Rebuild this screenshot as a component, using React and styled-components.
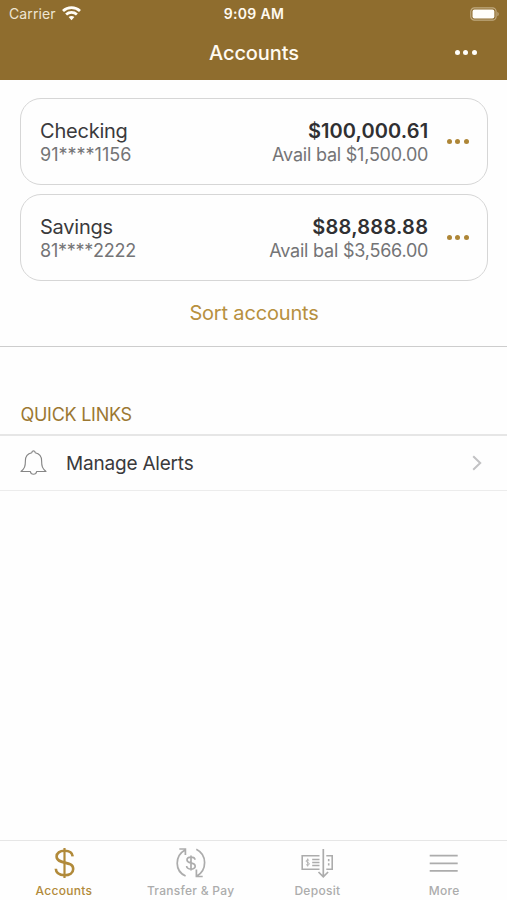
import React from "react";
import styled, { createGlobalStyle } from "styled-components";

const GlobalStyle = createGlobalStyle`
  * { box-sizing: border-box; }
  body { margin: 0; background: #fefefe; }
`;

const Screen = styled.div`
  width: 507px;
  height: 900px;
  display: flex;
  flex-direction: column;
  overflow: hidden;
  background: #fefefe;
  color: #3a3a3c;
  font-family: Inter, "Liberation Sans", sans-serif;
`;

const Header = styled.header`
  height: 80px;
  flex: none;
  background: #8f6d2e;
  color: #fffaf0;
`;

const StatusBar = styled.div`
  height: 27px;
  display: grid;
  grid-template-columns: 1fr auto 1fr;
  align-items: center;
  padding: 0 8px 0 9px;
`;

const Carrier = styled.div`
  display: flex;
  align-items: center;
  gap: 6px;
  color: #eee5d3;
`;

const Battery = styled.div`
  display: flex;
  justify-content: flex-end;
`;

const TitleBar = styled.div`
  height: 51px;
  display: grid;
  grid-template-columns: 1fr auto 1fr;
  align-items: center;
  padding-right: 30px;
  padding-left: 31px;
`;

const TitleAction = styled.div`
  display: flex;
  justify-content: flex-end;
`;

const Label = styled.span`
  display: block;
  white-space: nowrap;
  font-size: ${(p) => p.$size}px;
  line-height: ${(p) => p.$line || 24}px;
  font-weight: ${(p) => p.$weight || 400};
  letter-spacing: ${(p) => p.$track || 0}px;
  color: ${(p) => p.$color || "inherit"};
`;

const Dots = styled.div`
  display: flex;
  gap: 3.6px;
  color: ${(p) => p.$color};
`;

const Dot = styled.i`
  width: 5px;
  height: 5px;
  border-radius: 50%;
  background: currentColor;
`;

const AccountsSection = styled.section`
  height: 267px;
  flex: none;
  display: flex;
  flex-direction: column;
  gap: 9px;
  padding: 18px 19px 0 20px;
  border-bottom: 1px solid #cdcdcd;
`;

const Card = styled.article`
  height: 87px;
  flex: none;
  display: flex;
  align-items: center;
  border: 1.5px solid #d6d6d6;
  border-radius: 21px;
  padding: 0 18px 0 19px;
`;

const CardName = styled.div`
  flex: 1;
  padding-top: 2px;
`;

const Balance = styled.div`
  display: flex;
  flex-direction: column;
  align-items: flex-end;
  padding-top: 2px;
  margin-right: 18.6px;
`;

const SortButton = styled.button`
  align-self: center;
  margin: 11px 0 0;
  padding: 0;
  border: 0;
  background: none;
  font-family: inherit;
`;

const SectionTitle = styled.div`
  height: 89px;
  flex: none;
  display: flex;
  align-items: flex-end;
  padding: 0 20.5px 8px;
  border-bottom: 2px solid #e6e6e6;
`;

const LinkRow = styled.div`
  height: 55px;
  flex: none;
  display: flex;
  align-items: center;
  padding: 0 25px 0 20px;
  border-bottom: 1px solid #ececec;

  > span { flex: 1; margin-left: 19px; padding-top: 2px; }
`;

const Space = styled.div`
  flex: 1;
`;

const TabBar = styled.nav`
  height: 60px;
  flex: none;
  display: grid;
  grid-template-columns: repeat(4, 1fr);
  border-top: 1px solid #e6e6e6;
`;

const Tab = styled.div`
  display: flex;
  flex-direction: column;
  align-items: center;
  gap: 2px;
  padding-top: 6px;
  padding-left: 1px;
  color: ${(p) => (p.$active ? "#b18a3a" : "#acacac")};
`;

const Icon = styled.svg.attrs({ fill: "none", stroke: "currentColor" })`
  display: block;
  flex: none;
  overflow: visible;
`;

const MoreDots = ({ color }) => (
  <Dots $color={color}><Dot /><Dot /><Dot /></Dots>
);

const WifiIcon = () => (
  <Icon width="19" height="15" viewBox="0 0 19 15" color="#fffdf6" strokeWidth="2.8">
    <path d="M1 5C5.8.6 13.2.6 18 5" />
    <path d="M4.1 8.5c3.1-2.8 7.7-2.8 10.8 0" />
    <path d="M9.5 14.2 6.6 11.1c1.7-1.5 4.1-1.5 5.8 0Z" fill="currentColor" stroke="none" />
  </Icon>
);

const BatteryIcon = () => (
  <Icon width="29" height="14" viewBox="0 0 30 14">
    <rect x=".8" y=".7" width="26.2" height="12.6" rx="3.8" stroke="#c0aa80" strokeWidth="1.2" />
    <rect x="2.6" y="2.4" width="22.6" height="9.2" rx="2" fill="#fffefa" stroke="none" />
    <path d="M28.3 4.6c1.9.9 1.9 3.9 0 4.8Z" fill="#c0aa80" stroke="none" />
  </Icon>
);

const BellIcon = () => (
  <Icon width="27" height="26" viewBox="0 0 27 26" color="#868686" strokeWidth="1.15" strokeLinejoin="round">
    <path d="M11.8 2.8c0-2.6 3.4-2.6 3.4 0 4.1.9 6.4 4 6.4 7.9 0 5.8.8 7.8 4.4 10.8H16.6c-.4 3.6-5.8 3.6-6.2 0H1c3.6-3 4.4-5 4.4-10.8 0-3.9 2.3-7 6.4-7.9Z" />
  </Icon>
);

const ChevronIcon = () => (
  <Icon width="10" height="16" viewBox="0 0 10 16" color="#c2c2c4" strokeWidth="2">
    <path d="m1.2 1.3 7 6.7-7 6.7" />
  </Icon>
);

const DollarIcon = () => (
  <Icon width="20" height="32" viewBox="0 0 20 32" strokeWidth="2.6">
    <path d="M10.5 1v30" strokeWidth="2.2" />
    <path d="M18.7 9.4C18.3 5.7 15.1 3.8 10.5 3.8c-4.7 0-7.9 2.2-7.9 5.8 0 8.4 16.6 3.6 16.6 12.4 0 3.9-3.6 6.2-8.6 6.2-5.1 0-8.6-2.3-8.8-6.4" />
  </Icon>
);

const TransferIcon = () => (
  <Icon width="32" height="32" viewBox="0 0 32 32" strokeWidth="1.7">
    <path d="M10.6 29C-.5 24-.5 9 10 3M4.3 2h6.1v6M21.3 2.2c11 5.6 11 20.8.4 27M21.4 22.5v7h6.3" />
    <path d="M16 8.5v15M20 12.8c-.3-3.6-8-3.6-8 .1 0 4.2 8.2 1.8 8.2 6.3 0 3.8-8.2 3.9-8.6-.2" />
  </Icon>
);

const DepositIcon = () => (
  <Icon width="34" height="32" viewBox="0 0 34 32" strokeWidth="1.6">
    <path d="M19.5 8.8H2.2v13.4h17.3M26.3 8.8h5.9v13.4h-5.9" />
    <path d="M23.3 2v27.8M18.5 25l4.8 4.8 4.8-4.8" strokeWidth="1.7" />
    <path d="M12.2 12.5h7.3M12.2 15.5h7.3M12.2 18.5h7.3" strokeWidth="1.3" />
    <path d="M28.7 12v2.2M28.7 16.3v2.2" strokeWidth="1.6" />
    <path d="M7.7 11.5v8M9.2 13.6c-.8-1.2-3.3-.8-3.1.6.2 1.5 3.2 1 3.2 2.7 0 1.5-2.7 1.7-3.4.3" strokeWidth=".9" />
  </Icon>
);

const MenuIcon = () => (
  <Icon width="30" height="32" viewBox="0 0 30 32" strokeWidth="1.7">
    <path d="M.7 8.7h28M.7 16.3h28M.7 23.8h28" />
  </Icon>
);

const accounts = [
  { name: "Checking", number: "91****1156", balance: "$100,000.61", available: "Avail bal $1,500.00", numberTrack: 0, balanceTrack: 0.1 },
  { name: "Savings", number: "81****2222", balance: "$88,888.88", available: "Avail bal $3,566.00", numberTrack: -0.25, balanceTrack: 0.25 },
];

const tabs = [
  { label: "Accounts", icon: DollarIcon, active: true },
  { label: "Transfer & Pay", icon: TransferIcon },
  { label: "Deposit", icon: DepositIcon },
  { label: "More", icon: MenuIcon },
];

export default function App() {
  return (
    <Screen>
      <GlobalStyle />
      <Header>
        <StatusBar>
          <Carrier>
            <Label $size={14} $track={0.1}>Carrier</Label>
            <WifiIcon />
          </Carrier>
          <Label $size={14} $weight={600} $track={0.35}>9:09 AM</Label>
          <Battery><BatteryIcon /></Battery>
        </StatusBar>
        <TitleBar>
          <span />
          <Label $size={20} $weight={500} $track={-0.1}>Accounts</Label>
          <TitleAction><MoreDots color="#fffefa" /></TitleAction>
        </TitleBar>
      </Header>
      <AccountsSection>
        {accounts.map((a) => (
          <Card key={a.name}>
            <CardName>
              <Label $size={20} $track={-0.22}>{a.name}</Label>
              <Label $size={18} $line={23} $color="#747476" $track={a.numberTrack}>{a.number}</Label>
            </CardName>
            <Balance>
              <Label $size={20} $weight={600} $color="#303032" $track={a.balanceTrack}>{a.balance}</Label>
              <Label $size={18} $line={23} $color="#747476" $track={-0.22}>{a.available}</Label>
            </Balance>
            <MoreDots color="#ae8637" />
          </Card>
        ))}
        <SortButton><Label $size={20} $track={-0.17} $color="#b7903f">Sort accounts</Label></SortButton>
      </AccountsSection>
      <SectionTitle><Label $size={18} $line={22} $track={-0.27} $color="#9c7832">QUICK LINKS</Label></SectionTitle>
      <LinkRow>
        <BellIcon />
        <Label $size={19} $track={-0.2}>Manage Alerts</Label>
        <ChevronIcon />
      </LinkRow>
      <Space />
      <TabBar>
        {tabs.map(({ label, icon: TabIcon, active }) => (
          <Tab key={label} $active={active}>
            <TabIcon />
            <Label $size={12} $line={20} $weight={500} $track={0.28}>{label}</Label>
          </Tab>
        ))}
      </TabBar>
    </Screen>
  );
}
